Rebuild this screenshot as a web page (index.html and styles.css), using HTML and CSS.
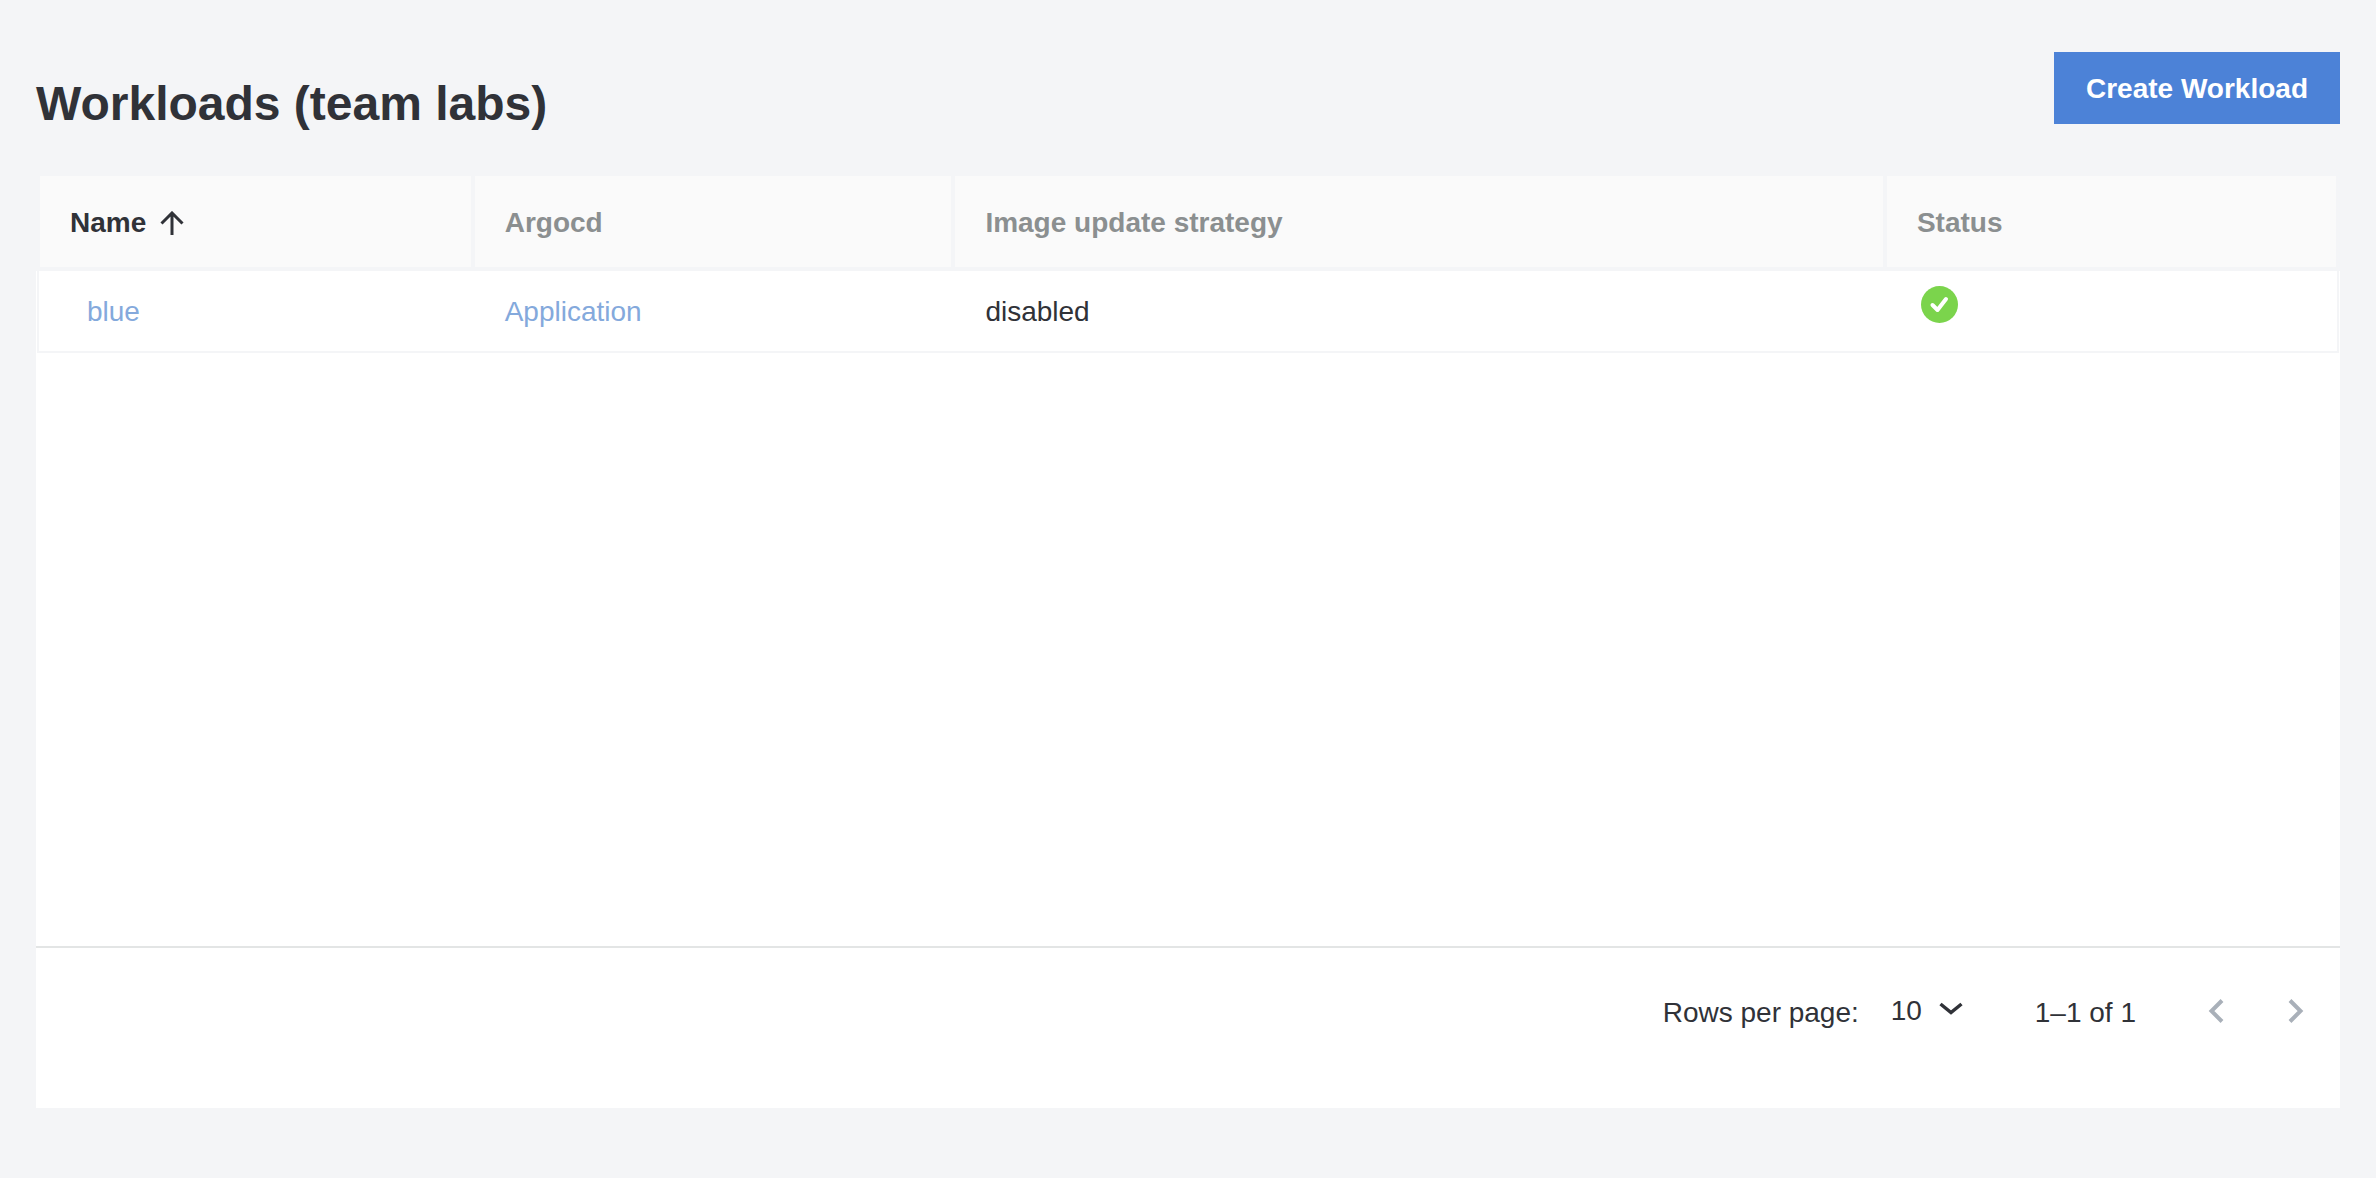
FILE: index.html
```html
<!DOCTYPE html>
<html lang="en">
<head>
<meta charset="utf-8">
<meta name="viewport" content="width=device-width, initial-scale=1">
<title>Workloads (team labs)</title>
<link rel="stylesheet" href="styles.css">
</head>
<body>
<main class="page">
  <header class="page-header">
    <h1 class="page-title">Workloads (team labs)</h1>
    <button class="create-button" type="button">Create Workload</button>
  </header>
  <section class="card">
    <div class="table-area">
      <table class="table">
        <colgroup>
          <col class="col-name"><col class="col-argocd"><col class="col-strategy"><col>
        </colgroup>
        <thead>
          <tr>
            <th scope="col" aria-sort="ascending">
              <button class="sort sort-active" type="button">Name
                <svg class="sort-icon" viewBox="0 0 24 24" aria-hidden="true"><path d="M12 24V2M1.500 12.500 12 2l10.500 10.500" fill="none" stroke="currentColor" stroke-width="3"/></svg>
              </button>
            </th>
            <th scope="col"><button class="sort" type="button">Argocd</button></th>
            <th scope="col"><button class="sort" type="button">Image update strategy</button></th>
            <th scope="col"><button class="sort" type="button">Status</button></th>
          </tr>
        </thead>
        <tbody>
          <tr>
            <td class="cell-name"><a class="link" href="#blue">blue</a></td>
            <td><a class="link" href="#application">Application</a></td>
            <td>disabled</td>
            <td class="cell-status">
              <svg class="status-icon" viewBox="0 0 37 37" role="img" aria-label="Healthy"><circle cx="18.500" cy="18.500" r="18.500" fill="#7bd44c"/><path d="M11.500 19 16.500 24 25 13" fill="none" stroke="#fff" stroke-width="4" stroke-linecap="round" stroke-linejoin="round"/></svg>
            </td>
          </tr>
        </tbody>
      </table>
    </div>
    <footer class="pagination">
      <label class="rows-label" for="rows">Rows per page:</label>
      <div class="select-wrap">
        <select class="rows-select" id="rows"><option>10</option><option>25</option></select>
        <svg class="select-icon" viewBox="0 0 24 14" aria-hidden="true"><path d="M1.500 2 12 10.500 22.500 2" fill="none" stroke="currentColor" stroke-width="3.500"/></svg>
      </div>
      <p class="range">1–1 of 1</p>
      <nav class="pager" aria-label="Pages">
        <button class="page-button" type="button" aria-label="Previous page" disabled><svg class="page-icon" viewBox="0 0 16 24" aria-hidden="true"><path d="M14 1.500 3.500 12 14 22.500" fill="none" stroke="currentColor" stroke-width="4"/></svg></button>
        <button class="page-button" type="button" aria-label="Next page" disabled><svg class="page-icon" viewBox="0 0 16 24" aria-hidden="true"><path d="M2 1.500 12.500 12 2 22.500" fill="none" stroke="currentColor" stroke-width="4"/></svg></button>
      </nav>
    </footer>
  </section>
</main>
</body>
</html>
```
FILE: styles.css
```css
* { box-sizing: border-box; }
body {
  margin: 0;
  background: #f4f5f7;
  color: #303238;
  font: 28px/40px "Liberation Sans", Arial, Helvetica, sans-serif;
}
button, select { font: inherit; color: inherit; border: 0; background: none; padding: 0; }
.page { padding: 52px 36px 70px; }
.page-header {
  display: flex;
  justify-content: space-between;
  align-items: flex-start;
  height: 120px;
}
.page-title { margin: 24px 0 0; font-size: 48px; line-height: 56px; font-weight: 700; }
.create-button {
  height: 72px;
  padding: 2px 32px 0;
  background: #4c82d7;
  color: #fff;
  font-weight: 700;
}
.card { background: #fff; }
.table-area { min-height: 774px; }
.table { width: 100%; table-layout: fixed; border-collapse: collapse; }
.col-name { width: 18.9%; }
.col-argocd { width: 20.9%; }
.col-strategy { width: 40.5%; }
th {
  height: 95px;
  padding: 3px 30px 0;
  border: 4px solid #f4f5f7;
  background: #fafafa;
  text-align: left;
}
.sort { display: flex; align-items: center; gap: 14px; font-weight: 700; color: #8b8f90; }
.sort-active { color: #303238; }
.sort-icon { width: 24px; height: 24px; }
td { height: 83px; padding: 1px 32px 0; border-bottom: 2px solid #f4f5f7; }
td:first-child { border-left: 2px solid #f4f5f7; }
td:last-child { border-right: 2px solid #f4f5f7; }
.cell-name { padding-left: 48px; }
.link { color: #84a9dc; text-decoration: none; }
.cell-status { vertical-align: top; padding: 15px 36px 0; }
.status-icon { display: block; width: 37px; height: 37px; }
.pagination {
  display: flex;
  align-items: flex-start;
  justify-content: flex-end;
  height: 162px;
  padding: 45px 24px 0 0;
  border-top: 2px solid #e3e5e5;
}
.rows-label { margin-right: 32px; }
.select-wrap { position: relative; margin-right: 72px; }
.rows-select { appearance: none; display: block; width: 72px; height: 36px; line-height: 36px; }
.select-icon { position: absolute; right: 0; top: 9px; width: 24px; height: 14px; pointer-events: none; }
.range { margin: 0 60px 0 0; }
.pager { display: flex; gap: 40px; }
.page-button { display: grid; place-items: center; width: 40px; height: 36px; color: #a9b0b9; }
.page-icon { width: 16px; height: 24px; }
```
